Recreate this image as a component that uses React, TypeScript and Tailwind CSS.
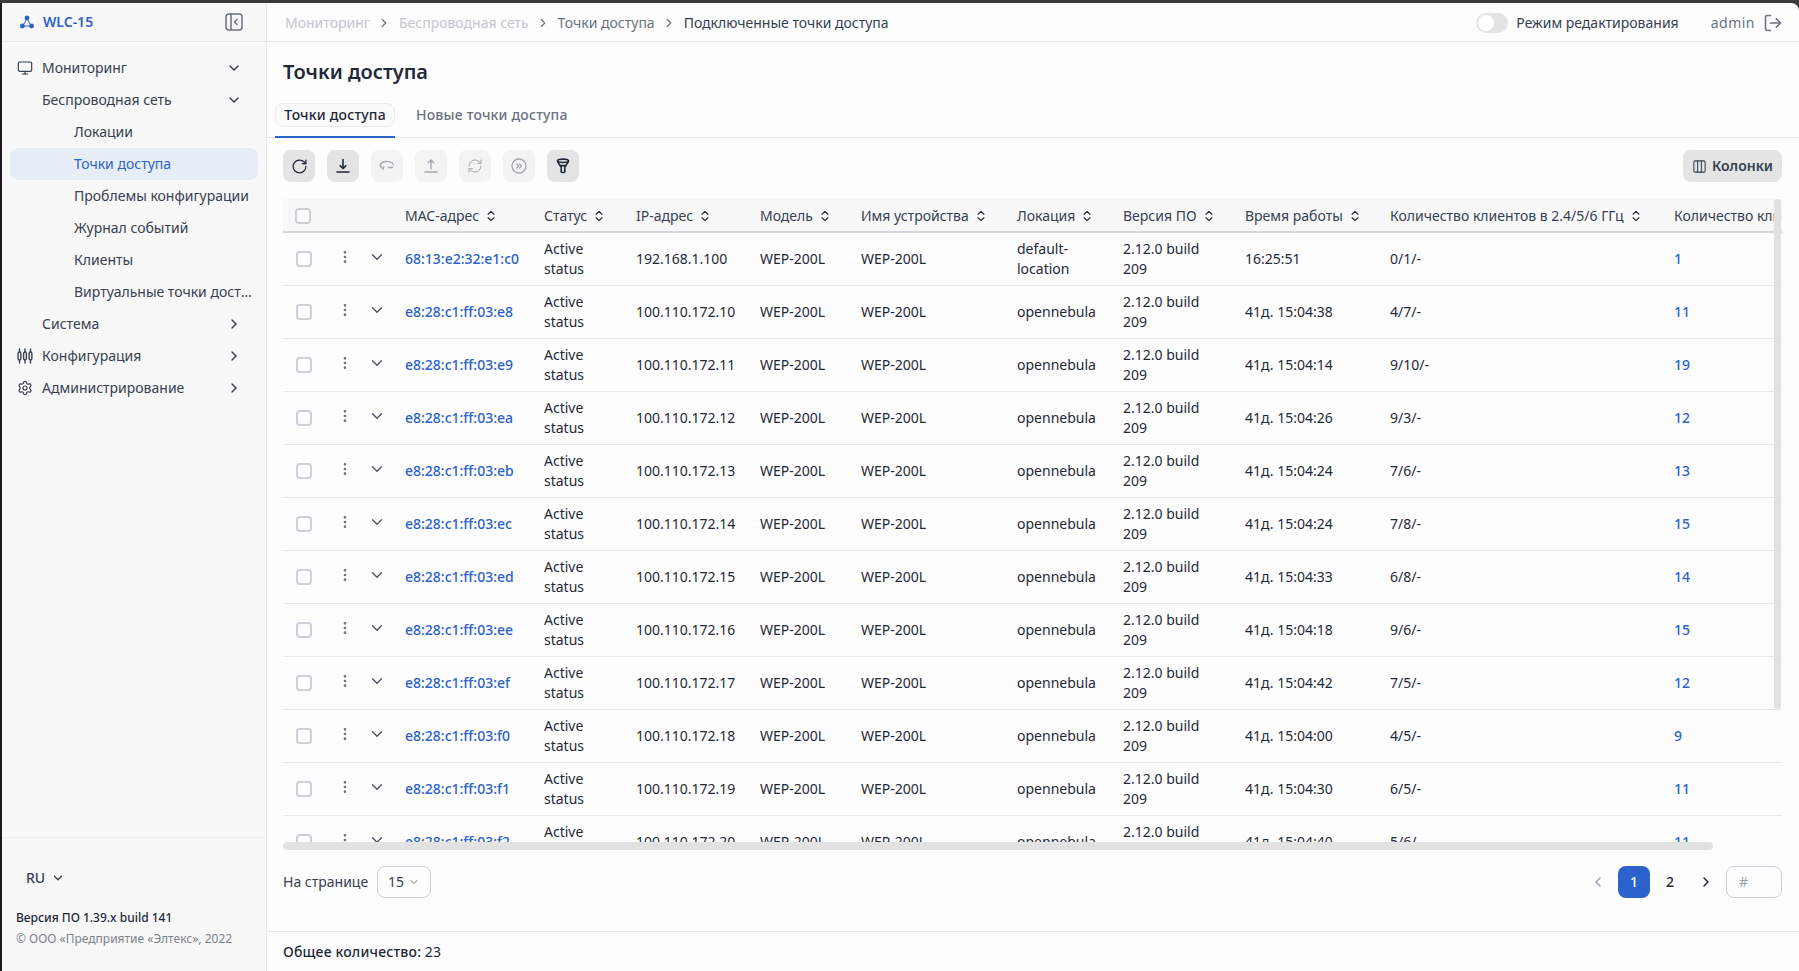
import { Monitor, Settings, ChevronDown, ChevronRight, ChevronLeft, ChevronsUpDown, EllipsisVertical, RotateCw, RefreshCw, LogOut, Columns3 } from "lucide-react";

const font = "font-['Noto_Sans',sans-serif]";

const rows = [
  ["68:13:e2:32:e1:c0", "192.168.1.100", "default-location", "16:25:51", "0/1/-", "1"],
  ["e8:28:c1:ff:03:e8", "100.110.172.10", "opennebula", "41д. 15:04:38", "4/7/-", "11"],
  ["e8:28:c1:ff:03:e9", "100.110.172.11", "opennebula", "41д. 15:04:14", "9/10/-", "19"],
  ["e8:28:c1:ff:03:ea", "100.110.172.12", "opennebula", "41д. 15:04:26", "9/3/-", "12"],
  ["e8:28:c1:ff:03:eb", "100.110.172.13", "opennebula", "41д. 15:04:24", "7/6/-", "13"],
  ["e8:28:c1:ff:03:ec", "100.110.172.14", "opennebula", "41д. 15:04:24", "7/8/-", "15"],
  ["e8:28:c1:ff:03:ed", "100.110.172.15", "opennebula", "41д. 15:04:33", "6/8/-", "14"],
  ["e8:28:c1:ff:03:ee", "100.110.172.16", "opennebula", "41д. 15:04:18", "9/6/-", "15"],
  ["e8:28:c1:ff:03:ef", "100.110.172.17", "opennebula", "41д. 15:04:42", "7/5/-", "12"],
  ["e8:28:c1:ff:03:f0", "100.110.172.18", "opennebula", "41д. 15:04:00", "4/5/-", "9"],
  ["e8:28:c1:ff:03:f1", "100.110.172.19", "opennebula", "41д. 15:04:30", "6/5/-", "11"],
  ["e8:28:c1:ff:03:f2", "100.110.172.20", "opennebula", "41д. 15:04:40", "5/6/-", "11"],
];

const headers = [
  { label: "MAC-адрес", w: "w-[139px]" },
  { label: "Статус", w: "w-[92px]" },
  { label: "IP-адрес", w: "w-[124px]" },
  { label: "Модель", w: "w-[101px]" },
  { label: "Имя устройства", w: "w-[156px]" },
  { label: "Локация", w: "w-[106px]" },
  { label: "Версия ПО", w: "w-[122px]" },
  { label: "Время работы", w: "w-[145px]" },
  { label: "Количество клиентов в 2.4/5/6 ГГц", w: "w-[284px]" },
];

const Logo = () => (
  <svg width="16" height="16" viewBox="0 0 16 16" className="text-[#2b62cc]">
    <path d="M8 4.500 4 11.500M8 4.500l4 7M4 12h8" stroke="currentColor" strokeWidth="1" fill="none" />
    <circle cx="8" cy="4" r="2.400" fill="currentColor" />
    <circle cx="3.400" cy="12" r="2.400" fill="currentColor" />
    <circle cx="12.600" cy="12" r="2.400" fill="currentColor" />
  </svg>
);

const Collapse = () => (
  <svg width="18" height="18" viewBox="0 0 18 18" fill="none" stroke="#6b7280" strokeWidth="1.500" strokeLinecap="round" strokeLinejoin="round">
    <rect x="1" y="1" width="16" height="16" rx="3" />
    <path d="M6 1v16M12 6.500 9.500 9l2.500 2.500" />
  </svg>
);

const SlidersIcon = () => (
  <svg width="16" height="16" viewBox="0 0 16 16" fill="none" stroke="#374151" strokeWidth="1.400" strokeLinecap="round">
    <path d="M2.500 1v14M8 1v14M13.500 1v14" />
    <rect x="1.100" y="4" width="2.800" height="8" rx="1.400" fill="#f8f8f8" />
    <rect x="6.600" y="4" width="2.800" height="8" rx="1.400" fill="#f8f8f8" />
    <rect x="12.100" y="4" width="2.800" height="8" rx="1.400" fill="#f8f8f8" />
  </svg>
);

const DownloadIcon = () => (
  <svg width="18" height="18" viewBox="0 0 18 18" fill="none" stroke="#1f2937" strokeWidth="1.600" strokeLinecap="round" strokeLinejoin="round">
    <path d="M9 2.500v9M6.200 8.800 9 11.500l2.800-2.700M3 15h12" />
  </svg>
);

const UploadIcon = () => (
  <svg width="18" height="18" viewBox="0 0 18 18" fill="none" stroke="#a3a8b0" strokeWidth="1.400" strokeLinecap="round" strokeLinejoin="round">
    <path d="M9 12V3M6.200 5.800 9 3l2.800 2.800M3 15h12" />
  </svg>
);

const LassoIcon = () => (
  <svg width="18" height="18" viewBox="0 0 18 18" fill="none" stroke="#a3a8b0" strokeWidth="1.300" strokeLinecap="round" strokeLinejoin="round">
    <path d="M14.500 10.500h-4M15.500 8C14.500 5.500 11 4.200 8 4.500 5 4.800 2.500 6.500 2 8.500l3 3.500 1-2.200" />
  </svg>
);

const SkipIcon = () => (
  <svg width="18" height="18" viewBox="0 0 18 18" fill="none" stroke="#a3a8b0" strokeWidth="1.300" strokeLinecap="round" strokeLinejoin="round">
    <circle cx="9" cy="9" r="7" />
    <path d="M6.800 7 8.600 9l-1.800 2M9.600 7l1.800 2-1.800 2" />
  </svg>
);

const FunnelIcon = () => (
  <svg width="18" height="18" viewBox="0 0 18 18" fill="none" stroke="#1f2937" strokeWidth="1.600" strokeLinecap="round" strokeLinejoin="round">
    <ellipse cx="9" cy="3.800" rx="5.500" ry="1.700" />
    <path d="M3.500 3.800c0 2 3 4.700 3.700 6.200v5c0 .6 3.600.6 3.600 0v-5c.7-1.500 3.700-4.200 3.700-6.200M5.800 8.600h6.400" />
  </svg>
);

const NavRow = ({ label, depth, icon, chevron, active }: { label: string; depth: number; icon?: React.ReactNode; chevron?: "down" | "right"; active?: boolean }) => (
  <div className={`mx-2 flex h-8 items-center rounded-lg text-sm ${chevron ? "pr-4" : "pr-[4px]"} ${active ? "bg-[#e8eef8] text-[#2b62cc]" : "text-[#374151]"}`}>
    <div className="flex w-[23px] shrink-0 justify-end">{icon}</div>
    <span className={`min-w-0 flex-1 truncate ${depth === 2 ? "pl-[41px]" : "pl-[9px]"}`}>{label}</span>
    {chevron === "down" && <ChevronDown size={16} strokeWidth={2.200} className="shrink-0 text-[#374151]" />}
    {chevron === "right" && <ChevronRight size={16} strokeWidth={2.200} className="shrink-0 text-[#374151]" />}
  </div>
);

const ToolButton = ({ children, off }: { children: React.ReactNode; off?: boolean }) => (
  <button className={`flex h-8 w-8 items-center justify-center rounded-lg ${off ? "bg-[#f3f3f3]" : "bg-[#e4e4e4]"}`}>{children}</button>
);

const Checkbox = () => <div className="h-4 w-4 rounded-[4px] border-2 border-[#cbd0da] bg-white" />;

const Sidebar = () => (
  <aside className="flex w-[265px] shrink-0 flex-col border-r border-[#e8e8e8] bg-[#f8f8f8]">
    <div className="flex h-[39px] shrink-0 items-center justify-between border-b border-[#e8e8e8] pl-[17px] pr-[23px]">
      <div className="flex items-center gap-[8px] text-sm font-semibold text-[#2b62cc]">
        <Logo />
        WLC-15
      </div>
      <Collapse />
    </div>
    <nav className="flex-1 pt-[10px]">
      <NavRow label="Мониторинг" depth={0} icon={<Monitor size={16} strokeWidth={1.800} className="text-[#374151]" />} chevron="down" />
      <NavRow label="Беспроводная сеть" depth={1} chevron="down" />
      <NavRow label="Локации" depth={2} />
      <NavRow label="Точки доступа" depth={2} active />
      <NavRow label="Проблемы конфигурации" depth={2} />
      <NavRow label="Журнал событий" depth={2} />
      <NavRow label="Клиенты" depth={2} />
      <NavRow label="Виртуальные точки доступа" depth={2} />
      <NavRow label="Система" depth={1} chevron="right" />
      <NavRow label="Конфигурация" depth={1} icon={<SlidersIcon />} chevron="right" />
      <NavRow label="Администрирование" depth={1} icon={<Settings size={16} strokeWidth={1.800} className="text-[#374151]" />} chevron="right" />
    </nav>
    <div className="h-[134px] shrink-0 border-t border-[#ececec] pl-[14px] pt-[30px]">
      <div className="flex h-5 items-center gap-[6px] pl-[10px] text-sm font-medium text-[#374151]">
        RU
        <ChevronDown size={14} strokeWidth={2.200} />
      </div>
      <div className="mt-[20px] text-xs font-medium leading-[20px] text-[#1f2937]">Версия ПО 1.39.x build 141</div>
      <div className="text-xs leading-[22px] text-[#7b818c]">© ООО «Предприятие «Элтекс», 2022</div>
    </div>
  </aside>
);

const Breadcrumb = () => (
  <div className="flex items-center text-sm">
    <span className="text-[#c2c6cd]">Мониторинг</span>
    <ChevronRight size={14} className="mx-[7.5px] text-[#6b7280]" />
    <span className="text-[#c2c6cd]">Беспроводная сеть</span>
    <ChevronRight size={14} className="mx-[7.5px] text-[#6b7280]" />
    <span className="text-[#6b7280]">Точки доступа</span>
    <ChevronRight size={14} className="mx-[7.5px] text-[#6b7280]" />
    <span className="text-[#374151]">Подключенные точки доступа</span>
  </div>
);

const ApTable = () => (
  <div className="relative ml-4 mr-[17px] h-[651px] overflow-hidden">
    <table className="w-[1700px] table-fixed border-collapse text-left text-sm text-[#1f2937]">
      <thead>
        <tr className="h-[33px] border-b-2 border-[#d4d7de] bg-[#f8f8f8] font-normal text-[#374151]">
          <th className="w-[54px] pl-[12px] pt-[2px] font-normal"><Checkbox /></th>
          <th className="w-[30px]" />
          <th className="w-[25px]" />
          {headers.map((h) => (
            <th key={h.label} className={`${h.w} px-[13px] pt-[2px] font-normal`}>
              <span className="flex items-center gap-[5px] whitespace-nowrap">
                {h.label}
                <ChevronsUpDown size={14} strokeWidth={2} className="text-[#1f2937]" />
              </span>
            </th>
          ))}
          <th className="whitespace-nowrap pl-[13px] pt-[2px] font-normal">Количество клиентов</th>
        </tr>
      </thead>
      <tbody>
        {rows.map((r) => (
          <tr key={r[0]} className="h-[53px] border-b border-[#e8e8e8]">
            <td className="pl-[13px]"><Checkbox /></td>
            <td><EllipsisVertical size={16} strokeWidth={2} className="-mt-[3px] text-[#6b7280]" /></td>
            <td><ChevronDown size={18} strokeWidth={1.800} className="-mt-[3px] ml-px text-[#4b5563]" /></td>
            <td className="px-[13px] font-medium text-[#2b62cc]">{r[0]}</td>
            <td className="px-[13px] leading-[20px]">Active status</td>
            <td className="px-[13px]">{r[1]}</td>
            <td className="px-[13px]">WEP-200L</td>
            <td className="px-[13px]">WEP-200L</td>
            <td className="px-[13px] leading-[20px]">{r[2]}</td>
            <td className="px-[13px] leading-[20px]">2.12.0 build 209</td>
            <td className="px-[13px]">{r[3]}</td>
            <td className="px-[13px]">{r[4]}</td>
            <td className="pl-[13px] font-medium text-[#2b62cc]">{r[5]}</td>
          </tr>
        ))}
      </tbody>
    </table>
    <div className="absolute right-[1px] top-0 h-[510px] w-[7px] rounded bg-[#e2e2e2]" />
    <div className="absolute bottom-0 left-0 h-2 w-[1430px] rounded bg-[#e2e2e2]" />
  </div>
);

const Pagination = () => (
  <div className="mt-[16px] flex h-8 items-center justify-between pl-4 pr-[17px] text-sm text-[#374151]">
    <div className="flex items-center gap-[9px]">
      На странице
      <div className="flex h-8 w-[54px] items-center justify-center gap-[4px] rounded-lg border border-[#cbd0da]">
        15
        <ChevronDown size={12} className="text-[#6b7280]" />
      </div>
    </div>
    <div className="flex items-center gap-[4px]">
      <div className="flex h-8 w-8 items-center justify-center text-[#9ca3af]"><ChevronLeft size={16} strokeWidth={2.200} /></div>
      <div className="flex h-8 w-8 items-center justify-center rounded-lg bg-[#2b62cc] font-medium text-white">1</div>
      <div className="flex h-8 w-8 items-center justify-center font-medium text-[#1f2937]">2</div>
      <div className="flex h-8 w-8 items-center justify-center text-[#1f2937]"><ChevronRight size={16} strokeWidth={2.200} /></div>
      <div className="flex h-8 w-14 items-center rounded-lg border border-[#cbd0da] pl-[12px] text-[#9ca3af]">#</div>
    </div>
  </div>
);

export default function App() {
  return (
    <div className={`flex h-[971px] w-[1799px] flex-col overflow-hidden bg-[#3c3c3c] ${font}`}>
      <div className="h-[3px] shrink-0" />
      <div className="flex min-h-0 flex-1">
        <div className="w-[2px] shrink-0 bg-[#1e181e]" />
        <div className="flex min-w-0 flex-1 overflow-hidden rounded-tr-lg bg-[#fdfdfd]">
          <Sidebar />
          <main className="flex min-w-0 flex-1 flex-col">
            <header className="flex h-[39px] shrink-0 items-center justify-between border-b border-[#e8e8e8] pl-[18px] pr-4 pt-[2px]">
              <Breadcrumb />
              <div className="flex items-center text-sm">
                <div className="flex h-[20px] w-[32px] items-center rounded-full bg-[#e4e4e4] px-[2px]">
                  <div className="h-4 w-4 rounded-full bg-white" />
                </div>
                <span className="ml-[8px] text-[#374151]">Режим редактирования</span>
                <span className="ml-8 tracking-[0.5px] text-[#6b7280]">admin</span>
                <LogOut size={20} strokeWidth={1.900} className="ml-2 text-[#6b7280]" />
              </div>
            </header>
            <h1 className="h-[54px] shrink-0 pl-4 pt-[14px] text-xl font-semibold leading-[32px] text-[#1f2937]">Точки доступа</h1>
            <div className="flex h-[42px] shrink-0 items-start border-b border-[#e8e8e8] pl-[8px] pt-[7px] text-sm">
              <div className="-mb-px flex h-[35px] w-[120px] flex-col items-start border-b-2 border-[#2b62cc]">
                <span className="flex h-[24px] w-[120px] items-center justify-center whitespace-nowrap rounded-lg border border-[#ececec] bg-[#fafafa] font-medium tracking-[0.2px] text-[#1f2937]">Точки доступа</span>
              </div>
              <span className="ml-[21px] flex h-[24px] items-center whitespace-nowrap font-medium tracking-[0.2px] text-[#6b7280]">Новые точки доступа</span>
            </div>
            <div className="flex h-[61px] shrink-0 items-start justify-between pl-4 pr-[17px] pt-[12px]">
              <div className="flex gap-3">
                <ToolButton><RotateCw size={17} strokeWidth={1.800} className="text-[#1f2937]" /></ToolButton>
                <ToolButton><DownloadIcon /></ToolButton>
                <ToolButton off><LassoIcon /></ToolButton>
                <ToolButton off><UploadIcon /></ToolButton>
                <ToolButton off><RefreshCw size={16} strokeWidth={1.500} className="text-[#a3a8b0]" /></ToolButton>
                <ToolButton off><SkipIcon /></ToolButton>
                <ToolButton><FunnelIcon /></ToolButton>
              </div>
              <button className="flex h-8 w-[99px] items-center justify-center gap-[5px] rounded-lg bg-[#e4e4e4] text-sm font-semibold text-[#374151]">
                <Columns3 size={15} strokeWidth={1.700} />
                Колонки
              </button>
            </div>
            <ApTable />
            <Pagination />
            <div className="mt-[33px] flex flex-1 items-center border-t border-[#e8e8e8] px-4 text-sm text-[#1f2937]">
              <span className="font-medium tracking-[0.2px]">Общее количество:</span>&nbsp;23
            </div>
          </main>
        </div>
      </div>
    </div>
  );
}
